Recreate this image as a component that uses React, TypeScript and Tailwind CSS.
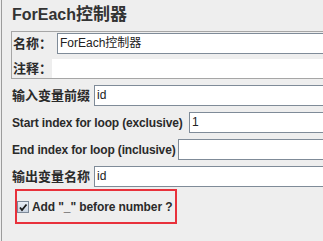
import React from "react";

const FONT = { fontFamily: '"Liberation Sans", "Noto Sans CJK SC", sans-serif' };

function Field({ value, className = "" }: { value?: string; className?: string }) {
  return (
    <div
      className={
        "h-[21px] flex-1 border border-[#7f8b98] border-r-0 bg-white pl-[2px] text-[12px] leading-[19px] text-[#222] whitespace-nowrap overflow-hidden " +
        className
      }
    >
      {value}
    </div>
  );
}

export default function App() {
  return (
    <div
      className="w-[323px] h-[241px] overflow-hidden bg-[#eeeeee] pl-[1px]"
      style={FONT}
    >
      <div className="h-full border-l border-[#9c9c9c] flex flex-col">
        {/* Title */}
        <div className="h-[31px] pl-[10px] pt-[4px] leading-[22px] font-bold text-[#333] whitespace-nowrap">
          <span className="text-[16px]">ForEach</span>
          <span className="text-[17px]">控制器</span>
        </div>

        {/* Name / comment panel */}
        <div className="ml-[9px] h-[48px] border border-r-0 border-[#a6a6a6] flex flex-col">
          <div className="mt-[1px] flex items-center h-[21px]">
            <div className="w-[45px] pl-[1px] text-[13px] font-bold text-[#2a2a2a] leading-[21px]">名称：</div>
            <Field value="ForEach控制器" />
          </div>
          <div className="mt-[5px] flex items-center h-[19px]">
            <div className="w-[40px] pl-[1px] text-[13px] font-bold text-[#2a2a2a] leading-[19px]">注释：</div>
            <div className="flex-1 h-[19px] bg-white" />
          </div>
        </div>

        {/* Rows */}
        <div className="mt-[6px] flex items-center h-[21px] pl-[10px]">
          <div className="w-[82px] text-[13px] font-bold text-[#2a2a2a] whitespace-nowrap">输入变量前缀</div>
          <Field value="id" />
        </div>
        <div className="mt-[6px] flex items-center h-[21px] pl-[10px]">
          <div className="w-[177px] text-[12px] font-bold text-[#2a2a2a] tracking-[-0.15px] whitespace-nowrap">Start index for loop (exclusive)</div>
          <Field value="1" />
        </div>
        <div className="mt-[6px] flex items-center h-[21px] pl-[10px]">
          <div className="w-[166px] text-[12px] font-bold text-[#2a2a2a] tracking-[-0.15px] whitespace-nowrap">End index for loop (inclusive)</div>
          <Field value="" />
        </div>
        <div className="mt-[6px] flex items-center h-[21px] pl-[10px]">
          <div className="w-[82px] text-[13px] font-bold text-[#2a2a2a] whitespace-nowrap">输出变量名称</div>
          <Field value="id" />
        </div>

        {/* Checkbox highlighted */}
        <div className="mt-[2px] ml-[13px] w-[162px] h-[35px] border-2 border-[#e8313b] pt-[10px]">
          <div className="flex items-center h-[12px] gap-[3px]">
            <div className="w-[12px] h-[12px] border border-[#7d8a99] bg-gradient-to-b from-[#e9eef5] to-[#c9d4e1] flex items-center justify-center">
              <svg width="10" height="10" viewBox="0 0 10 10">
                <path d="M2 5.5 L4 8 L8.5 2.5" stroke="#1a1a1a" strokeWidth="1.8" fill="none" />
              </svg>
            </div>
            <div className="text-[12px] font-bold text-[#2a2a2a] tracking-[-0.1px] whitespace-nowrap leading-[14px]">
              Add "_" before number ?
            </div>
          </div>
        </div>
      </div>
    </div>
  );
}
